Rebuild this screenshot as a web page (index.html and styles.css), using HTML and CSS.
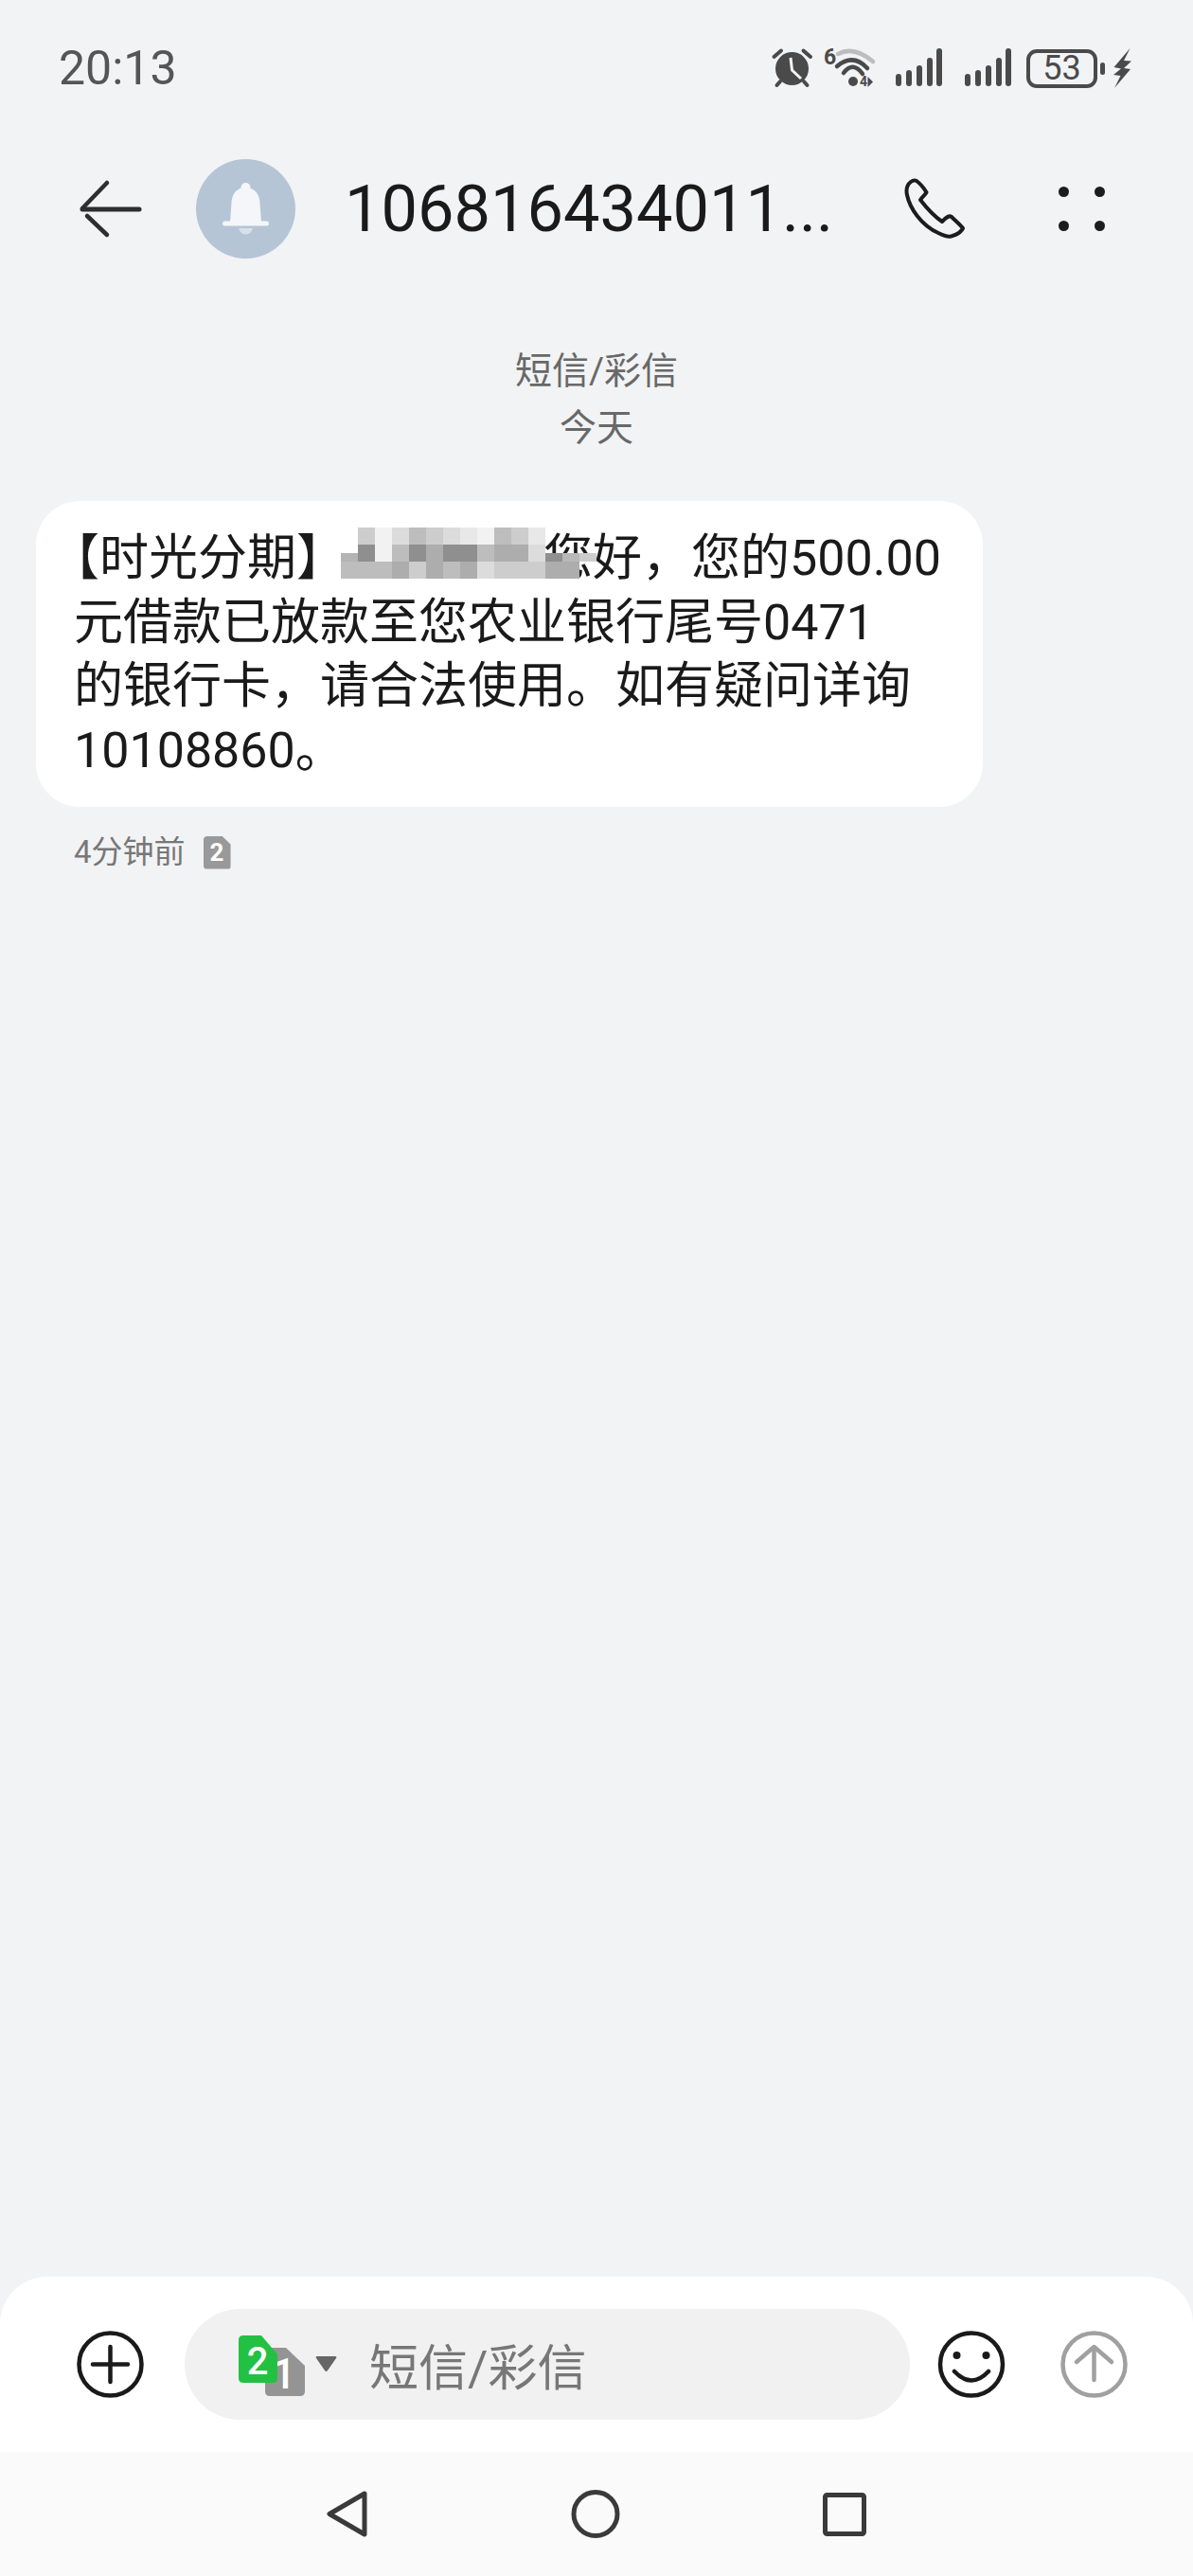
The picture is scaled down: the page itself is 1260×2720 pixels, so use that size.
FILE: index.html
```html
<!DOCTYPE html>
<html lang="zh-CN">
<head>
    <meta charset="UTF-8">
    <meta name="viewport" content="width=device-width, initial-scale=1.0">
    <title>短信</title>
    <link rel="stylesheet" href="styles.css">
</head>
<body>
    <div class="screen">
        <!-- Status bar -->
        <div class="status">
            <span class="time">20:13</span>
            <div class="status-icons">
                <svg class="ic-alarm" width="42" height="42" viewBox="0 0 42 42">
                    <circle cx="20.5" cy="21.5" r="17.5" fill="#4a4a4a"/>
                    <path d="M1.5 9 L9 2.5 M32.5 2.5 L40 9 M8 35 L4.5 39 M33 35 L36.5 39" stroke="#4a4a4a" stroke-width="4" stroke-linecap="round" fill="none"/>
                    <path d="M19 10 L20.5 23 L30 32" stroke="#f2f3f5" stroke-width="3" fill="none"/>
                </svg>
                <svg class="ic-wifi" width="60" height="44" viewBox="0 0 60 44">
                    <text class="tiny" x="1" y="18">6</text>
                    <path d="M16 7 Q33 -2 53 15" stroke="#bdbdbd" stroke-width="4.5" stroke-linecap="round" fill="none"/>
                    <path d="M15 20 Q32 6 47 22" stroke="#4a4a4a" stroke-width="4.5" stroke-linecap="round" fill="none"/>
                    <path d="M22 27 Q32 14 42 28" stroke="#4a4a4a" stroke-width="4.5" stroke-linecap="round" fill="none"/>
                    <circle cx="32" cy="36" r="5" fill="#4a4a4a"/>
                    <text class="tiny-4" x="39" y="41">4</text>
                    <path d="M47.500 31 L53 36.500 L47.500 42 Z" fill="#4a4a4a"/>
                </svg>
                <svg class="ic-signal" width="50" height="42" viewBox="0 0 50 42">
                    <rect x="0" y="27" width="6" height="13" rx="3" fill="#4a4a4a"/>
                    <rect x="11" y="23" width="6" height="17" rx="3" fill="#4a4a4a"/>
                    <rect x="22" y="18" width="6" height="22" rx="3" fill="#4a4a4a"/>
                    <rect x="33" y="10" width="6" height="30" rx="3" fill="#4a4a4a"/>
                    <rect x="43" y="0" width="6" height="40" rx="3" fill="#4a4a4a"/>
                </svg>
                <svg class="ic-signal second" width="50" height="42" viewBox="0 0 50 42">
                    <rect x="0" y="27" width="6" height="13" rx="3" fill="#4a4a4a"/>
                    <rect x="11" y="23" width="6" height="17" rx="3" fill="#4a4a4a"/>
                    <rect x="22" y="18" width="6" height="22" rx="3" fill="#4a4a4a"/>
                    <rect x="33" y="10" width="6" height="30" rx="3" fill="#4a4a4a"/>
                    <rect x="43" y="0" width="6" height="40" rx="3" fill="#4a4a4a"/>
                </svg>
                <div class="battery">53</div>
                <div class="battery-nub"></div>
                <svg class="ic-bolt" width="19" height="42" viewBox="0 0 19 42">
                    <path d="M17.500 0 L0.500 20 L8 21.500 L0 28 L7.500 29 L1 42 L18 22 L11 21 L19 13.500 L11 13 Z" fill="#4a4a4a"/>
                </svg>
            </div>
        </div>

        <!-- Header -->
        <div class="header">
            <svg class="back" width="65" height="60" viewBox="0 0 65 60">
                <path d="M29 3 L3 30" stroke="#2e2e2e" stroke-width="4.500" stroke-linecap="round" fill="none"/>
                <path d="M8 38 L29 58" stroke="#2e2e2e" stroke-width="4.500" stroke-linecap="round" fill="none"/>
                <path d="M3 31 H63" stroke="#2e2e2e" stroke-width="5" stroke-linecap="round" fill="none"/>
            </svg>
            <div class="avatar">
                <svg width="105" height="105" viewBox="0 0 105 105">
                    <circle cx="52.500" cy="30" r="5" fill="#f4f6f9"/>
                    <path d="M52.500 30 C42 30 38 38 37.500 46 L36 67 H69 L67.500 46 C67 38 63 30 52.500 30 Z" fill="#f4f6f9"/>
                    <rect x="28" y="65.500" width="49" height="5" rx="2.500" fill="#f4f6f9"/>
                    <path d="M45 73 H60 Q58 79.500 52.500 79.500 Q47 79.500 45 73 Z" fill="#d8e1ea"/>
                </svg>
            </div>
            <div class="title">106816434011...</div>
            <svg class="phone" width="66" height="64" viewBox="0 0 66 64">
                <path d="M7 4 C3 7 1.500 11 3 18 C6 32 18 50 36 58 C42 61 47 63 51 61 C55 60 60 57 62 53 C60 50 54 45 50 41 C47 39 44 42 40 46 C34 42 24 32 17 23 C19 20 22 18 23.500 15 C21 11 17 6 13 3 C11 2 9 2.500 7 4 Z" stroke="#1c1c1c" stroke-width="4" stroke-linejoin="round" fill="none"/>
            </svg>
            <div class="more">
                <span></span><span></span><span></span><span></span>
            </div>
        </div>

        <!-- Messages -->
        <div class="thread">
            <div class="thread-label">
                <div>短信/彩信</div>
                <div>今天</div>
            </div>
            <div class="bubble">
                <span class="open">【</span>时光分期<span class="close">】</span><span class="name"><span class="mosaic">
                    <i></i><i class="g2"></i><i class="g5"></i><i class="g3"></i><i class="g1"></i><i class="g2"></i><i class="g3"></i><i class="g4"></i><i class="g5"></i><i class="g1"></i><i class="g2"></i><i class="g4"></i><i></i><i></i><i></i>
                    <i class="half-b"></i><i class="g7"></i><i class="g5"></i><i class="g1"></i><i class="g7"></i><i class="g6"></i><i class="g7"></i><i class="g7"></i><i class="g1"></i><i class="g6"></i><i class="g6"></i><i class="g3"></i><i class="half-d"></i><i class="half-m"></i><i class="half-l"></i>
                    <i class="g1"></i><i class="g1"></i><i class="g1"></i><i class="g6"></i><i class="g2"></i><i class="g6"></i><i class="g1"></i><i class="g6"></i><i class="g3"></i><i class="g2"></i><i class="g2"></i><i class="g2"></i><i class="g6"></i><i class="g6"></i><i></i>
                </span></span>您好，您的500.00<br>
                元借款已放款至您农业银行尾号0471<br>
                的银行卡，请合法使用。如有疑问详询<br>
                10108860。
            </div>
            <div class="meta">
                <span>4分钟前</span>
                <span class="sim-badge">2</span>
            </div>
        </div>

        <!-- Composer -->
        <div class="composer">
            <svg class="round-btn" width="71" height="71" viewBox="0 0 71 71">
                <circle cx="35.500" cy="35.500" r="33" stroke="#1a1a1a" stroke-width="4.500" fill="none"/>
                <path d="M17 35.500 H54 M35.500 17 V54" stroke="#1a1a1a" stroke-width="4.500" stroke-linecap="round" fill="none"/>
            </svg>
            <div class="input-pill">
                <svg class="sim-switch" width="70" height="64" viewBox="0 0 70 64">
                    <path d="M34 13 H50 L70 32 V59 Q70 64 65 64 H33 Q28 64 28 59 V18 Q28 13 34 13 Z" fill="#949494"/>
                    <text class="sim-one" x="48" y="56" text-anchor="middle">1</text>
                    <path d="M5 0 H24 L41 20 V45 Q41 50 36 50 H5 Q0 50 0 45 V5 Q0 0 5 0 Z" fill="#22c143"/>
                    <text class="sim-two" x="20" y="41" text-anchor="middle">2</text>
                </svg>
                <svg class="caret" width="23" height="17" viewBox="0 0 23 17">
                    <path d="M2 0 H21 Q23 0 22 2 L13 15 Q11.500 17 10 15 L1 2 Q0 0 2 0 Z" fill="#666"/>
                </svg>
                <span class="placeholder">短信/彩信</span>
            </div>
            <svg class="smile" width="72" height="71" viewBox="0 0 72 71">
                <circle cx="36" cy="35.500" r="33" stroke="#1a1a1a" stroke-width="4.500" fill="none"/>
                <circle cx="20.500" cy="26" r="4" fill="#1a1a1a"/>
                <circle cx="51.500" cy="26" r="4" fill="#1a1a1a"/>
                <path d="M18 43 Q36 62 54 43" stroke="#1a1a1a" stroke-width="4.500" stroke-linecap="round" fill="none"/>
            </svg>
            <svg class="send" width="71" height="71" viewBox="0 0 71 71">
                <circle cx="35.500" cy="35.500" r="33" stroke="#a0a0a0" stroke-width="4.500" fill="none"/>
                <path d="M35.500 52 V18 M17 33 L35.500 17 L54 33" stroke="#a0a0a0" stroke-width="4.500" stroke-linecap="round" stroke-linejoin="round" fill="none"/>
            </svg>
        </div>

        <!-- Nav bar -->
        <div class="navbar">
            <svg width="44" height="51" viewBox="0 0 44 51">
                <path d="M40 4 L3 25.500 L40 47 Z" stroke="#3a3a3a" stroke-width="5" stroke-linejoin="round" fill="none"/>
            </svg>
            <svg width="52" height="51" viewBox="0 0 52 51">
                <circle cx="26" cy="25.500" r="23" stroke="#3a3a3a" stroke-width="5" fill="none"/>
            </svg>
            <svg width="46" height="46" viewBox="0 0 46 46">
                <rect x="2.500" y="2.500" width="41" height="41" rx="2" stroke="#3a3a3a" stroke-width="5" fill="none"/>
            </svg>
        </div>
    </div>
</body>
</html>
```

FILE: styles.css
```css
* {
    box-sizing: border-box;
    margin: 0;
    padding: 0;
}

body {
    font-family: Roboto, 'Noto Sans CJK SC', sans-serif;
    background-color: #f2f3f5;
    color: #1a1a1a;
}

svg {
    display: block;
    flex-shrink: 0;
    overflow: visible;
}

.screen {
    width: 1260px;
    height: 2720px;
    display: flex;
    flex-direction: column;
    overflow: hidden;
}

/* Status bar */
.status {
    height: 144px;
    padding: 0 65px 0 62px;
    display: flex;
    justify-content: space-between;
    align-items: center;
}

.time {
    font-size: 50px;
    color: #555;
}

.status-icons {
    display: flex;
    align-items: center;
}

.ic-wifi {
    margin-left: 11px;
}

.ic-signal {
    margin-left: 17px;
}

.ic-signal.second {
    margin-left: 23px;
}

.tiny {
    font-size: 23px;
    font-weight: 700;
    fill: #4a4a4a;
}

.tiny-4 {
    font-size: 14px;
    font-weight: 700;
    fill: #4a4a4a;
}

.battery {
    width: 75px;
    height: 41px;
    margin-left: 15px;
    border: 4px solid #4a4a4a;
    border-radius: 11px;
    font-size: 36px;
    line-height: 33px;
    text-align: center;
    color: #4a4a4a;
}

.battery-nub {
    width: 5px;
    height: 13px;
    margin-left: 3px;
    border-radius: 3px;
    background: #4a4a4a;
}

.ic-bolt {
    margin-left: 9px;
}

/* Header */
.header {
    height: 152px;
    padding-left: 84px;
    display: flex;
    align-items: center;
}

.avatar {
    width: 105px;
    height: 105px;
    margin-left: 58px;
    border-radius: 50%;
    background-color: #b5c5d5;
    flex-shrink: 0;
}

.title {
    width: 591px;
    margin-left: 52px;
    font-size: 68.5px;
    white-space: nowrap;
}

.more {
    width: 49px;
    height: 47px;
    margin-left: 97px;
    display: grid;
    grid-template-columns: auto auto;
    justify-content: space-between;
    align-content: space-between;
}

.more span {
    width: 11px;
    height: 11px;
    border-radius: 50%;
    background: #1c1c1c;
}

/* Messages */
.thread {
    flex: 1;
    padding: 66px 0 0 38px;
}

.thread-label {
    margin-left: -38px;
    font-size: 39px;
    line-height: 60px;
    text-align: center;
    color: #686868;
}

.bubble {
    width: 1000px;
    height: 323px;
    margin-top: 47px;
    padding: 27px 0 0 40px;
    background: #fff;
    border-radius: 46px;
    font-size: 52px;
    line-height: 67.5px;
    white-space: nowrap;
}

.open {
    margin-left: -25px;
}

.close {
    margin-right: -24px;
}

.name {
    display: inline-block;
    position: relative;
    width: 233px;
    height: 40px;
}

.mosaic {
    position: absolute;
    left: 19px;
    top: -10px;
    width: 270px;
    display: grid;
    grid-template-columns: repeat(15, 18px);
    grid-template-rows: repeat(3, 18px);
    z-index: 1;
}

.g1 { background: #bdbdbd; }
.g2 { background: #cdcdcd; }
.g3 { background: #dcdcdc; }
.g4 { background: #e8e8e8; }
.g5 { background: #f2f2f2; }
.g6 { background: #adadad; }
.g7 { background: #8f8f8f; }
.half-b { background: linear-gradient(transparent 50%, #b4b4b4 50%); border-radius: 9px 0 0 0; }
.half-d { background: linear-gradient(transparent 50%, #8f8f8f 50%); }
.half-m { background: linear-gradient(transparent 50%, #b8b8b8 50%); }
.half-l { background: linear-gradient(transparent 50%, #cccccc 50%); border-radius: 0 9px 0 0; }

.meta {
    margin: 30px 0 0 40px;
    display: flex;
    align-items: center;
    gap: 19px;
    font-size: 33px;
    line-height: 36px;
    color: #777;
}

.sim-badge {
    width: 29px;
    height: 35px;
    background: #999;
    border-radius: 4px;
    clip-path: polygon(0 0, 68% 0, 100% 26%, 100% 100%, 0 100%);
    font-size: 26px;
    line-height: 35px;
    font-weight: 700;
    text-align: center;
    color: #fff;
}

/* Composer */
.composer {
    height: 185px;
    padding-left: 81px;
    display: flex;
    align-items: center;
    background: #fff;
    border-radius: 50px 50px 0 0;
}

.input-pill {
    width: 766px;
    height: 117px;
    margin-left: 43px;
    padding-left: 57px;
    display: flex;
    align-items: center;
    background: #f1f1f2;
    border-radius: 59px;
}

.sim-switch {
    margin-top: 2px;
}

.sim-two {
    font-size: 40px;
    font-weight: 500;
    fill: #fff;
}

.sim-one {
    font-size: 44px;
    font-weight: 500;
    fill: #fff;
}

.caret {
    margin-left: 11px;
}

.placeholder {
    margin-left: 34px;
    font-size: 52px;
    color: #777;
}

.smile {
    margin-left: 29px;
}

.send {
    margin-left: 58px;
}

/* Nav bar */
.navbar {
    height: 131px;
    display: flex;
    justify-content: center;
    align-items: center;
    gap: 214px;
    background: #fafafa;
}
```
